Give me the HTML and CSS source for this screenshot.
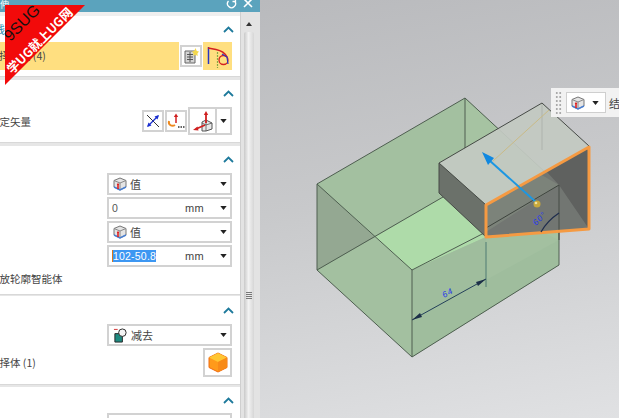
FILE: index.html
```html
<!DOCTYPE html>
<html lang="zh">
<head>
<meta charset="utf-8">
<title>拉伸</title>
<link rel="stylesheet" href="styles.css">
</head>
<body>
<svg class="defs" width="0" height="0" aria-hidden="true">
  <defs>
    <symbol id="cube" viewBox="0 0 14 14">
      <path d="M7 1 13 3.500V10L7 13 1 10V3.500Z" fill="#e4e4e4" stroke="#777" stroke-width="1"/>
      <path d="M1 3.500 7 6 13 3.500M7 6V13" fill="none" stroke="#888" stroke-width="1"/>
      <path d="M1 10 7 13 13 10" fill="none" stroke="#4a7fd0" stroke-width="1.400"/>
      <path d="M5 12V7" stroke="#e02020" stroke-width="1.600"/>
      <path d="M3.800 8 5 5.800 6.200 8Z" fill="#e02020"/>
    </symbol>
    <symbol id="caret" viewBox="0 0 8 5"><path d="M0 0H8L4 5Z" fill="#222"/></symbol>
    <symbol id="chev" viewBox="0 0 11 7"><path d="M1 6 5.500 1.500 10 6" fill="none" stroke="#1e7a9c" stroke-width="1.800"/></symbol>
  </defs>
</svg>

<div class="app">
  <div class="dialog">
    <div class="title"><span class="title-text">伸</span>
      <span class="title-tools">
        <svg width="11" height="11" viewBox="0 0 11 11"><path d="M2.500 3A4 4 0 1 0 8.500 3M9.500 0.500V3.500H6.500" fill="none" stroke="#fff" stroke-width="1.300"/></svg>
        <svg width="10" height="10" viewBox="0 0 10 10"><path d="M1 1 9 9M9 1 1 9" stroke="#fff" stroke-width="1.600"/></svg>
      </span>
    </div>
    <div class="dialog-body">
      <aside class="panel">
        <div class="strip"></div>

        <section class="sec sec-1">
          <div class="sec-head"><span class="sec-title teal">线</span><svg class="chev"><use href="#chev"/></svg></div>
          <div class="curve-row">
            <div class="curve-sel"><span class="cut">择曲线 (4)</span></div>
            <button class="btn btn-s22">
              <svg width="16" height="16" viewBox="0 0 16 16"><path d="M2 3H12V15H2Z" fill="#d4d4d4" stroke="#666"/><path d="M4 6.500H10M4 9H10M4 11.500H10M7 4V14" stroke="#555"/><path d="M12.500 0 13.800 3 16 3.500 14.400 5.400 14.800 8 12.500 6.700 10.200 8 10.600 5.400 9 3.500 11.200 3Z" fill="#f4d84c"/></svg>
            </button>
            <button class="btn-curve">
              <svg width="24" height="24" viewBox="0 0 24 24"><path d="M11.500 8V24" stroke="#86a848" stroke-width="1.200" stroke-dasharray="2 1"/><path d="M2.500 3V20" stroke="#2a35c0" stroke-width="1.500"/><path d="M2 4 10 5.500C15 6.500 19 9 21 13" fill="none" stroke="#d42020" stroke-width="1.500"/><circle cx="17.500" cy="16" r="4.500" fill="none" stroke="#d42020" stroke-width="1.300"/><path d="M16 10 21 13 22 20" fill="none" stroke="#2a35c0" stroke-width="1.200"/></svg>
            </button>
          </div>
        </section>

        <section class="sec sec-2">
          <div class="sec-head"><span class="sec-title"></span><svg class="chev"><use href="#chev"/></svg></div>
          <div class="vector-row">
            <span class="label cut">指定矢量</span>
            <button class="btn btn-s22">
              <svg width="16" height="16" viewBox="0 0 16 16"><path d="M2 2 14 14" stroke="#333" stroke-width="1"/><path d="M3 13 13 3" stroke="#1a2fd0" stroke-width="1.300"/><path d="M14 2 9.500 3.500 12.500 6.500ZM2 14 6.500 12.500 3.500 9.500Z" fill="#1a2fd0"/></svg>
            </button>
            <button class="btn btn-s22">
              <svg width="18" height="18" viewBox="0 0 18 18"><path d="M9 11V4" stroke="#d02020" stroke-width="1.500"/><path d="M6.800 5 9 1.500 11.200 5Z" fill="#d02020"/><path d="M2 9C1 13 5 15 8 13" fill="none" stroke="#ee8a20" stroke-width="2"/><path d="M11 15H12.500M13.500 15H15M16 15H17.500" stroke="#333" stroke-width="1.500"/></svg>
            </button>
            <div class="split">
              <button class="split-main">
                <svg width="24" height="24" viewBox="0 0 24 24"><path d="M11 22V13L15 11 21 14V20L15 22Z" fill="#e8e8e8" stroke="#555"/><path d="M15 11V22M11 14 15 16 21 14" fill="none" stroke="#555" stroke-width=".8"/><path d="M15 14V5" stroke="#d02020" stroke-width="1.800"/><path d="M12.800 6 15 2 17.200 6Z" fill="#d02020"/><path d="M14 16 5 20" stroke="#d02020" stroke-width="1.800"/><path d="M6.500 17.500 2 21 7.500 21.500Z" fill="#d02020"/></svg>
              </button>
              <span class="split-drop"><svg class="caret"><use href="#caret"/></svg></span>
            </div>
          </div>
        </section>

        <section class="sec sec-3">
          <div class="sec-head"><span class="sec-title"></span><svg class="chev"><use href="#chev"/></svg></div>
          <div class="fields">
            <div class="field"><svg class="ico"><use href="#cube"/></svg><span class="val">值</span><svg class="caret"><use href="#caret"/></svg></div>
            <div class="field"><span class="num">0</span><span class="unit">mm</span><svg class="caret"><use href="#caret"/></svg></div>
            <div class="field"><svg class="ico"><use href="#cube"/></svg><span class="val">值</span><svg class="caret"><use href="#caret"/></svg></div>
            <div class="field"><span class="num"><span class="selected">102-50.8</span></span><span class="unit">mm</span><svg class="caret"><use href="#caret"/></svg></div>
          </div>
          <div class="label cut cut-wide">开放轮廓智能体</div>
        </section>

        <section class="sec sec-4">
          <div class="sec-head"><span class="sec-title"></span><svg class="chev"><use href="#chev"/></svg></div>
          <div class="fields">
            <div class="field">
              <svg class="ico ico-sub" viewBox="0 0 16 16"><path d="M1 1.500H5" stroke="#d03030" stroke-width="1"/><path d="M2 6H10V15H2Z" fill="#1f8a80" stroke="#222"/><circle cx="10" cy="5" r="4" fill="#f4f4f4" stroke="#222"/></svg>
              <span class="val">减去</span><svg class="caret"><use href="#caret"/></svg>
            </div>
          </div>
          <div class="body-row">
            <span class="label cut">选择体 (1)</span>
            <button class="btn btn-body">
              <svg width="20" height="21" viewBox="0 0 20 21"><path d="M10 1 19 5.500V15.500L10 20 1 15.500V5.500Z" fill="#ff9a1a" stroke="#f06a10"/><path d="M1 5.500 10 10 19 5.500 10 1Z" fill="#ffc633"/><path d="M10 10V20L19 15.500V5.500Z" fill="#f88a18"/></svg>
            </button>
          </div>
        </section>

        <section class="sec sec-5">
          <div class="sec-head"><span class="sec-title"></span><svg class="chev"><use href="#chev"/></svg></div>
          <div class="fields"><div class="field"></div></div>
        </section>
      </aside>

      <div class="scrollbar">
        <span class="scroll-up"></span>
        <div class="thumb"><span class="grip"></span></div>
      </div>
    </div>
  </div>

  <main class="viewport">
    <svg class="scene" viewBox="260 0 359 418" width="359" height="418">
      <path d="M317 184 465 98 559 185V265L412 357 317 270Z" fill="#a3c0a0"/>
      <path d="M317 184 375 237 317 270Z" fill="#94a892"/>
      <path d="M465 98 559 185 559 240 486 205 439 163 465 148Z" fill="#a6c3a2"/>
      <path d="M375 237 443 197 486 237 412 270Z" fill="#aedba9"/>
      <path d="M412 270 486 237 486 280 559 240V265L412 357Z" fill="#9fbd9d"/>
      <g fill="none" stroke="#4e5e50" stroke-width="1">
        <path d="M317 184 465 98 559 185V265L412 357 317 270Z"/>
        <path d="M317 184 412 270V357M317 270 443 197M412 270 486 232"/>
        <path d="M465 98V150M559 185 486 237"/>
      </g>
      <path d="M439 163 542 103 589 146 486 205Z" fill="#c3c9c2" fill-opacity=".93"/>
      <path d="M439 163 486 205V237L439 193Z" fill="#686d67" fill-opacity=".95"/>
      <path d="M486 205 589 147V229L486 237Z" fill="#727672"/>
      <path d="M546 171 589 147V229L559 185Z" fill="#5f615f"/>
      <path d="M486 205 540 174 559 185 486 232Z" fill="#7c837a"/>
      <path d="M486 228 559 185" fill="none" stroke="#3e443e" stroke-width="1"/>
      <path d="M542 103V150" stroke="#aeb3ad" stroke-width="1"/>
      <path d="M439 163 542 103 589 146M439 163 486 205M439 163V193L486 237" fill="none" stroke="#464a46" stroke-width="1"/>
      <path d="M559 185V240" stroke="#454a45" stroke-width="1"/>
      <path d="M486 205 589 147V229L486 237Z" fill="none" stroke="#f59a42" stroke-width="3" stroke-linejoin="round"/>
      <path d="M549 110 493 161" stroke="#c9ba86" stroke-width="1"/>
      <path d="M537 203 489 160" stroke="#1c97e2" stroke-width="2"/>
      <path d="M482 152 494 158 488 165Z" fill="#1088e0"/>
      <circle cx="537" cy="204" r="3.500" fill="#c9a93c"/>
      <circle cx="536" cy="203" r="1.300" fill="#f0e2a0"/>
      <path d="M541 232Q547 221 559 213" fill="none" stroke="#1f2d4d" stroke-width="1.300"/>
      <text class="dim" transform="translate(536 226) rotate(-45)">60°</text>
      <path d="M486 242V287" stroke="#4e7a72" stroke-width="1"/>
      <path d="M412 320 486 279" stroke="#24405a" stroke-width="1"/>
      <path d="M412 320 422 317 420 313ZM486 279 476 282 478 286Z" fill="#1c2f48"/>
      <text class="dim" transform="translate(444 298) rotate(-28)">64</text>
    </svg>
    <div class="float-bar">
      <span class="float-grip"></span>
      <div class="float-sel"><svg class="ico"><use href="#cube"/></svg><svg class="caret"><use href="#caret"/></svg></div>
      <span class="float-text">结</span>
    </div>
  </main>
</div>

<div class="ribbon">
  <span class="ribbon-a">9SUG</span>
  <span class="ribbon-b">学UG就上UG网</span>
</div>
</body>
</html>
```

FILE: styles.css
```css
* { box-sizing: border-box; }
html, body { margin: 0; padding: 0; }
body {
  width: 619px;
  height: 418px;
  overflow: hidden;
  position: relative;
  font-family: "Noto Sans CJK SC", "Liberation Sans", sans-serif;
  font-size: 11px;
  color: #444;
}
.defs { position: absolute; }
button { padding: 0; margin: 0; font: inherit; background: none; border: 0; }

.app { display: flex; width: 619px; height: 418px; }

.dialog { width: 260px; flex: none; display: flex; flex-direction: column; }
.dialog-body { flex: 1; display: flex; min-height: 0; }

.title {
  height: 12px;
  flex: none;
  background: #5ba3bd;
  color: #fff;
  display: flex;
  justify-content: space-between;
  line-height: 10px;
}
.title-text { font-size: 9px; }
.title-tools { display: flex; align-items: flex-start; gap: 6px; padding-right: 7px; margin-top: -2px; }
.title-tools svg { display: block; }

.panel {
  width: 240px;
  flex: none;
  display: flex;
  flex-direction: column;
  background: #e6e6e6;
  overflow: hidden;
}
.strip { height: 4px; flex: none; background: #efefef; }

.sec { background: #fff; flex: none; padding-right: 8px; border-bottom: 1px solid #d8d8d8; }
.sec-1 { height: 61px; margin-bottom: 3px; }
.sec-2 { height: 63px; margin-bottom: 3px; }
.sec-3 { height: 149px; margin-bottom: 1px; }
.sec-4 { height: 89px; margin-bottom: 2px; }
.sec-5 { flex: 1; border-bottom: 0; }

.sec-head {
  display: flex;
  justify-content: space-between;
  align-items: center;
  height: 26px;
}
.sec-3 .sec-head { height: 27px; }
.sec-4 .sec-head { height: 28px; }
.sec-title { font-size: 11px; }
.teal { color: #2a8db0; margin-left: -6px; }
.chev { width: 11px; height: 7px; margin-right: -2px; display: block; }
.caret { width: 7px; height: 4px; display: block; flex: none; }

.cut { display: block; white-space: nowrap; }
.label { font-size: 10.5px; }

.btn {
  border: 2px solid #d2d2d2;
  background: #fff;
  display: flex;
  align-items: center;
  justify-content: center;
  flex: none;
}
.btn-s22 { width: 22px; height: 22px; }

.curve-row { display: flex; align-items: center; height: 28px; }
.curve-sel {
  flex: 1;
  height: 28px;
  margin-right: 1px;
  background: #ffdf80;
  font-size: 10.5px;
  line-height: 28px;
  overflow: hidden;
  white-space: nowrap;
}
.curve-sel .cut { margin-left: -1px; }
.btn-curve {
  width: 29px;
  height: 28px;
  margin-left: 1px;
  flex: none;
  background: #ffdf80;
  display: flex;
  align-items: center;
  justify-content: center;
}

.vector-row { display: flex; align-items: center; gap: 1px; height: 28px; margin-top: 1px; }
.vector-row .label { flex: 1; margin-left: -11px; }
.split {
  display: flex;
  width: 44px;
  height: 28px;
  flex: none;
  border: 2px solid #d2d2d2;
  background: #fff;
}
.split-main { width: 27px; border-right: 2px solid #d2d2d2; display: flex; align-items: center; justify-content: center; }
.split-drop { flex: 1; display: flex; align-items: center; justify-content: center; }

.fields {
  display: flex;
  flex-direction: column;
  gap: 2px;
  width: 125px;
  margin-left: 107px;
}
.field {
  height: 22px;
  border: 2px solid #d2d2d2;
  background: #fff;
  display: flex;
  align-items: center;
  padding: 0 3px 0 3px;
  font-size: 10.5px;
}
.ico { width: 14px; height: 14px; flex: none; margin-left: 1px; }
.ico-sub { width: 15px; height: 15px; }
.val { flex: 1; margin-left: 3px; font-size: 11px; }
.num { flex: 1; font-family: "Liberation Sans", sans-serif; color: #555; letter-spacing: .2px; }
.unit { width: 30px; font-family: "Liberation Sans", sans-serif; color: #444; font-size: 11px; letter-spacing: .3px; margin-right: 5px; }
.selected { background: #3d97f2; color: #fff; border-left: 1px solid #d7781c; }

.cut-wide { margin: 4px 0 0 -11px; height: 16px; line-height: 16px; }

.body-row { display: flex; align-items: center; justify-content: space-between; margin-top: 2px; height: 29px; }
.body-row .label { margin-left: -11px; }
.btn-body { width: 29px; height: 29px; }

.scrollbar {
  width: 20px;
  flex: none;
  background: #e3e3e3;
  padding: 4px 6px 0 3px;
  border-left: 1px solid #cfcfcf;
  display: flex;
  flex-direction: column;
  align-items: stretch;
}
.scroll-up { height: 16px; flex: none; position: relative; }
.scroll-up::before {
  content: "";
  position: absolute;
  left: 2px;
  top: 6px;
  border: 3px solid transparent;
  border-top: 0;
  border-bottom: 4px solid #333;
}
.thumb {
  flex: 1;
  background: linear-gradient(90deg, #c9c9c9, #f2f2f2 45%, #d6d6d6);
  border-radius: 2px 2px 0 0;
  position: relative;
}
.grip {
  position: absolute;
  left: 2px;
  top: 260px;
  width: 6px;
  height: 7px;
  background: repeating-linear-gradient(#777 0 1px, transparent 1px 2px);
}

.viewport {
  flex: 1;
  position: relative;
  background: linear-gradient(170deg, #b9babd 0%, #c8c9cb 45%, #e0e1e3 100%);
}
.scene { display: block; }
.dim { font-family: "Liberation Sans", sans-serif; font-style: italic; font-size: 8.5px; fill: #2a3ce8; letter-spacing: 1px; }

.float-bar {
  position: absolute;
  left: 291px;
  top: 88px;
  width: 68px;
  height: 29px;
  background: #f2f2f2;
  display: flex;
  align-items: center;
  gap: 3px;
  padding-left: 4px;
  overflow: hidden;
}
.float-grip {
  width: 7px;
  height: 24px;
  flex: none;
  background: radial-gradient(circle, #aaa 0 1px, transparent 1.2px) 0 0 / 3.5px 4px;
}
.float-sel {
  width: 40px;
  height: 21px;
  margin-left: 1px;
  flex: none;
  background: #fff;
  border: 1px solid #cfcfcf;
  display: flex;
  align-items: center;
  justify-content: space-between;
  padding: 0 6px 0 3px;
}
.float-text { font-size: 11px; white-space: nowrap; }

.ribbon {
  position: absolute;
  left: 5px;
  top: 5px;
  width: 80px;
  height: 80px;
  background: #f20a0a;
  clip-path: polygon(0 0, 100% 0, 0 100%);
}
.ribbon-a, .ribbon-b {
  position: absolute;
  white-space: nowrap;
  transform: translate(-50%, -50%) rotate(-45deg);
}
.ribbon-a {
  left: 17px;
  top: 18px;
  font-family: "Liberation Sans", sans-serif;
  font-size: 16px;
  color: #111;
}
.ribbon-b {
  left: 34px;
  top: 35px;
  font-size: 12.5px;
  font-weight: 700;
  color: #fff;
}
```
